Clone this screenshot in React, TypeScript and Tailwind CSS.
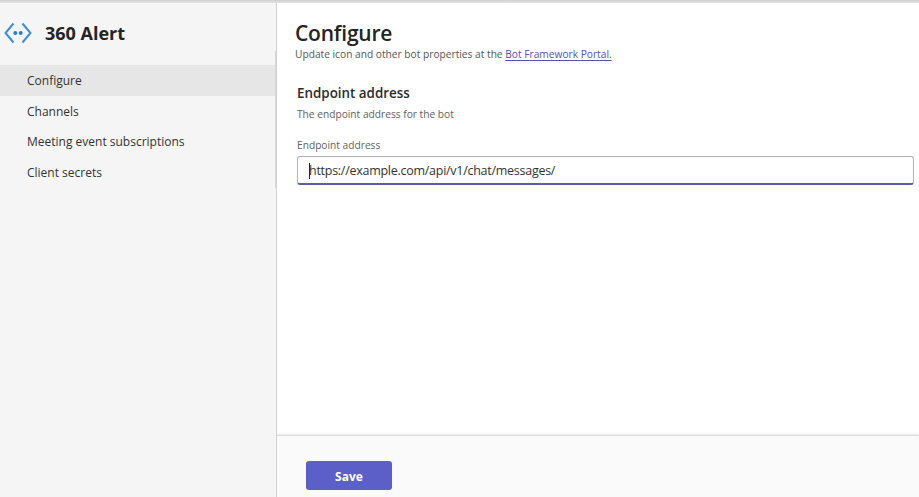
const font = "[font-family:'Open_Sans','Noto_Sans',sans-serif]";

const navItems = ["Configure", "Channels", "Meeting event subscriptions", "Client secrets"];

const BotIcon = () => (
  <svg width="28" height="22" viewBox="0 0 28 22" fill="none" className="shrink-0">
    <path d="M9.5 1.5 L1.5 11 L9.5 20.5" stroke="#3b8fd9" strokeWidth="2" />
    <path d="M18.5 1.5 L26.5 11 L18.5 20.5" stroke="#3b8fd9" strokeWidth="2" />
    <circle cx="11.3" cy="11" r="2" fill="#2b7cd3" />
    <circle cx="16.7" cy="11" r="2" fill="#2b7cd3" />
  </svg>
);

export default function App() {
  return (
    <div className={`h-[497px] w-[919px] overflow-hidden bg-white flex flex-col text-[#242424] ${font}`}>
      <div className="h-[3px] shrink-0 bg-gradient-to-b from-[#cfcfcf] to-[#e4e4e4]" />
      <div className="flex flex-1 min-h-0">
        <aside className="relative w-[277px] shrink-0 bg-[#f5f5f5] border-r border-[#d1d1d1]">
          <div className="absolute right-0 top-[48px] h-[137px] w-px bg-[#d9d9d9]" />
          <div className="h-[62px] pl-[4px] pt-[19px] flex items-start gap-[13px]">
            <BotIcon />
            <span className="text-[18px] leading-[24px] font-bold -mt-px">360 Alert</span>
          </div>
          <nav className="flex flex-col">
            {navItems.map((item, i) => (
              <div
                key={item}
                className={`h-[30.5px] pl-[27px] pt-[2px] flex items-center text-[12px] text-[#333] ${i === 0 ? "bg-[#e6e6e6] mr-px" : ""}`}
              >
                {item}
              </div>
            ))}
          </nav>
        </aside>
        <main className="flex-1 min-w-0 flex flex-col">
          <div className="flex-1 pl-[18px] pr-[5px] pt-[15px]">
            <h1 className="text-[21px] leading-[30px] font-semibold tracking-[-0.2px]">Configure</h1>
            <p className="text-[10.2px] leading-[14px] text-[#555] -mt-[1px]">
              Update icon and other bot properties at the{" "}
              <a className="text-[#4f52b2] underline underline-offset-2">Bot Framework Portal.</a>
            </p>
            <div className="pl-[2px] pt-[22px]">
              <h2 className="text-[13.4px] leading-[20px] font-semibold text-[#2b2b2b]">Endpoint address</h2>
              <p className="text-[10.2px] leading-[14px] text-[#616161] mt-[4px]">The endpoint address for the bot</p>
              <label className="block text-[10.2px] leading-[14px] text-[#616161] mt-[17px]">Endpoint address</label>
              <div className="mt-[4px] h-[29px] rounded-[3px] border border-[#b3b3b3] border-b-2 border-b-[#5b5fa7] pl-[11px] pt-[2px] flex items-center text-[12.5px] tracking-[-0.27px] text-[#333]">
                <span className="w-px h-[16px] bg-[#222] -mr-px" />
                https://example.com/api/v1/chat/messages/
              </div>
            </div>
          </div>
          <footer className="h-[62px] shrink-0 bg-[#fafafa] border-t border-[#dcdcdc] shadow-[0_-1px_2px_rgba(0,0,0,0.1)] pl-[29px] pt-[25px]">
            <button className="w-[86px] h-[29px] rounded-[3px] bg-[#5b5fc7] text-white text-[12px] font-bold pt-[2px]">Save</button>
          </footer>
        </main>
      </div>
    </div>
  );
}
